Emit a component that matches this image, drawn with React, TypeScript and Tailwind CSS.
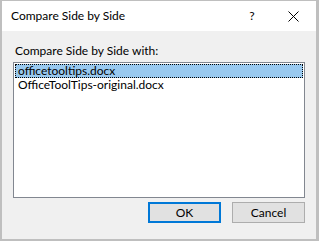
import React from 'react'

const font = { fontFamily: 'Lato, "Noto Sans", sans-serif' }

export default function App() {
    return (
        <div
            className="w-[319px] h-[241px] bg-[#f0f0f0] border-t border-l-2 border-r-[3px] border-b-2 border-[#bfbfbf] flex flex-col text-[12px] text-black"
            style={font}
        >
            <div className="h-[30px] bg-white flex items-center pl-[9px] pr-[14px]">
                <span className="flex-1 leading-none">Compare Side by Side</span>
                <span className="w-[12px] text-center mr-[30px]">?</span>
                <svg width="11" height="11" viewBox="0 0 11 11" className="mr-[3px]">
                    <path d="M0.5 0.5 L10.5 10.5 M10.5 0.5 L0.5 10.5" stroke="#000" strokeWidth="1" />
                </svg>
            </div>

            <div className="flex-1 flex flex-col px-[11px] pt-[12px]">
                <div className="pl-[2px] leading-[15px]">Compare Side by Side with:</div>
                <div className="mt-[4px] h-[136px] bg-white border border-[#828790] p-[1px] flex flex-col">
                    <div className="h-[14px] bg-[#99c9ef] outline outline-1 outline-dotted outline-black -outline-offset-1 pl-[3px] leading-[14px]">
                        officetooltips.docx
                    </div>
                    <div className="h-[14px] pl-[3px] leading-[14px]">OfficeToolTips-original.docx</div>
                </div>
                <div className="mt-[4px] flex justify-end gap-[11px]">
                    <button className="w-[73px] h-[21px] bg-[#e1e1e1] border-2 border-[#0078d7] leading-none">
                        OK
                    </button>
                    <button className="w-[73px] h-[21px] bg-[#e1e1e1] border border-[#adadad] leading-none">
                        Cancel
                    </button>
                </div>
            </div>
        </div>
    )
}
